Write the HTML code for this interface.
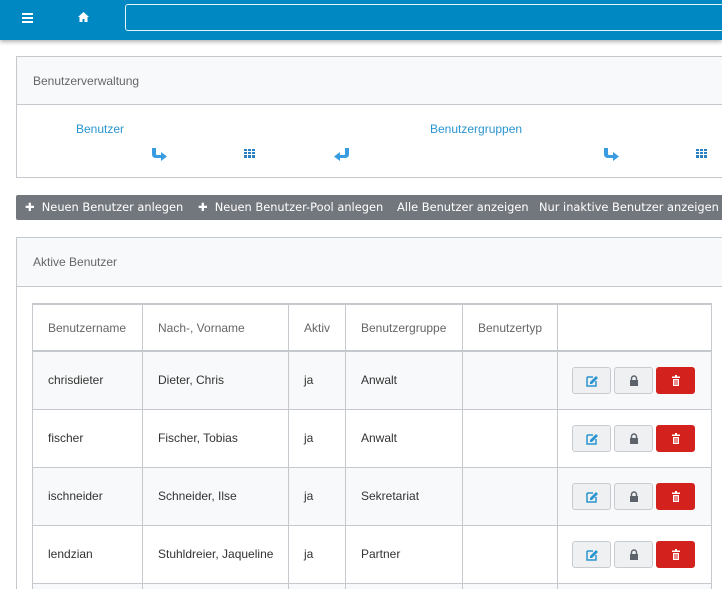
<!DOCTYPE html>
<html style="overflow:hidden;width:722px;height:589px"><head><meta charset="utf-8"><style>
*{box-sizing:border-box;margin:0;padding:0}
body{width:722px;height:589px;overflow:hidden;background:#fff;font-family:"Liberation Sans",sans-serif;font-size:12px;color:#333;position:relative}
.nav{position:absolute;left:0;top:0;width:722px;height:40px;background:#0088c2;box-shadow:0 2px 4px rgba(0,0,0,.3)}
.search{position:absolute;left:125px;top:4px;width:610px;height:27px;border:1px solid #e6f2f8;border-radius:3px}
.p{position:absolute;border:1px solid #c5c9ce;border-right:none;background:#fff}
.ph{background:#f8f9fa;border-bottom:1px solid #c5c9ce;color:#666;padding-left:16px}
a{color:#2a95d0;text-decoration:none;position:absolute}
.tb{position:absolute;left:16px;top:195px;width:720px;height:25px;background:#72767d;border-radius:2px;color:#fff;font-family:"DejaVu Sans",sans-serif;font-size:11.4px;line-height:25px;white-space:nowrap}
.tb span{position:absolute}
.wrap{position:absolute;left:0;top:0;width:722px;height:589px;overflow:hidden}
table{position:absolute;left:32px;top:303px;border-collapse:collapse;width:680px}
td,th{border:1px solid #c5c9ce;text-align:left;padding-left:15px;font-weight:normal;height:58px;vertical-align:middle}
th{height:47px;color:#666;border-width:2px 1px 2px 1px}
tr.g td{background:#f8f9fa}
.b{display:inline-block;width:39px;height:27px;border:1px solid #c8ccd1;border-radius:3px;background:#eef0f2;margin-right:3px;vertical-align:middle;position:relative}
.b svg{position:absolute;left:13px;top:7px}
.b.r{background:#d3221e;border-color:#d3221e}
</style></head><body><div class="wrap">
<div class="nav">
<svg style="position:absolute;left:22px;top:13px" width="11" height="10"><rect y="0" width="11" height="2" fill="#fff"/><rect y="4" width="11" height="2" fill="#fff"/><rect y="8" width="11" height="2" fill="#fff"/></svg>
<svg style="position:absolute;left:78px;top:12px" width="11" height="10"><path d="M5.5 0L0 5h1.5v5h3V7h2v3h3V5H11z" fill="#fff"/></svg>
<div class="search"></div>
</div>
<div class="p" style="left:16px;top:56px;width:710px;height:122px">
<div class="ph" style="height:48px;line-height:48px">Benutzerverwaltung</div>
<a style="left:59px;top:65px">Benutzer</a>
<a style="left:413px;top:65px">Benutzergruppen</a>
<svg style="position:absolute;left:134px;top:90px" width="17" height="15"><path d="M1 1h4v6q0 1 1 1h4V5l6 4.5L10 14v-3H5q-4 0-4-4z" fill="#3a9be0"/></svg>
<svg style="position:absolute;left:227px;top:92px" width="13" height="10" fill="#2a7fc0"><rect x="0" y="0" width="3" height="2"/><rect x="4" y="0" width="3" height="2"/><rect x="8" y="0" width="3" height="2"/><rect x="0" y="3" width="3" height="2"/><rect x="4" y="3" width="3" height="2"/><rect x="8" y="3" width="3" height="2"/><rect x="0" y="6" width="3" height="3"/><rect x="4" y="6" width="3" height="3"/><rect x="8" y="6" width="3" height="3"/></svg>
<svg style="position:absolute;left:316px;top:90px" width="17" height="15"><path d="M16 1h-4v6q0 1-1 1H7V5L1 9.5 7 14v-3h5q4 0 4-4z" fill="#3a9be0"/></svg>
<svg style="position:absolute;left:586px;top:90px" width="17" height="15"><path d="M1 1h4v6q0 1 1 1h4V5l6 4.5L10 14v-3H5q-4 0-4-4z" fill="#3a9be0"/></svg>
<svg style="position:absolute;left:679px;top:92px" width="13" height="10" fill="#2a7fc0"><rect x="0" y="0" width="3" height="2"/><rect x="4" y="0" width="3" height="2"/><rect x="8" y="0" width="3" height="2"/><rect x="0" y="3" width="3" height="2"/><rect x="4" y="3" width="3" height="2"/><rect x="8" y="3" width="3" height="2"/><rect x="0" y="6" width="3" height="3"/><rect x="4" y="6" width="3" height="3"/><rect x="8" y="6" width="3" height="3"/></svg>
</div>
<div class="tb">
<span style="left:9px">✚&nbsp; Neuen Benutzer anlegen</span>
<span style="left:182px">✚&nbsp; Neuen Benutzer-Pool anlegen</span>
<span style="left:381px">Alle Benutzer anzeigen</span>
<span style="left:523px">Nur inaktive Benutzer anzeigen</span>
</div>
<div class="p" style="left:16px;top:237px;width:710px;height:360px">
<div class="ph" style="height:49px;line-height:49px">Aktive Benutzer</div>
</div>
<table>
<tr><th style="width:110px">Benutzername</th><th style="width:146px">Nach-, Vorname</th><th style="width:57px">Aktiv</th><th style="width:117px">Benutzergruppe</th><th style="width:95px">Benutzertyp</th><th></th></tr>
<tr class="g"><td>chrisdieter</td><td>Dieter, Chris</td><td>ja</td><td>Anwalt</td><td></td><td style="padding-left:14px"><span class="b"><svg width="12" height="12"><path d="M1 2h6M1 2v9h9V6" stroke="#2a95d0" fill="none" stroke-width="1.5"/><path d="M10 1l2 2-6 6H4V7z" fill="#2a95d0"/></svg></span><span class="b"><svg width="12" height="12"><rect x="2" y="5" width="8" height="6" fill="#5c636a"/><path d="M3.5 5V3.5a2.5 2.5 0 0 1 5 0V5" stroke="#5c636a" fill="none" stroke-width="1.4"/></svg></span><span class="b r"><svg width="12" height="12"><rect x="2" y="1.5" width="8" height="1.5" fill="#fff"/><rect x="5" y="0" width="2" height="2" fill="#fff"/><path d="M3 4h6v7H3z" fill="#fff"/><path d="M5 5v5M7 5v5" stroke="#d3221e"/></svg></span></td></tr>
<tr><td>fischer</td><td>Fischer, Tobias</td><td>ja</td><td>Anwalt</td><td></td><td style="padding-left:14px"><span class="b"><svg width="12" height="12"><path d="M1 2h6M1 2v9h9V6" stroke="#2a95d0" fill="none" stroke-width="1.5"/><path d="M10 1l2 2-6 6H4V7z" fill="#2a95d0"/></svg></span><span class="b"><svg width="12" height="12"><rect x="2" y="5" width="8" height="6" fill="#5c636a"/><path d="M3.5 5V3.5a2.5 2.5 0 0 1 5 0V5" stroke="#5c636a" fill="none" stroke-width="1.4"/></svg></span><span class="b r"><svg width="12" height="12"><rect x="2" y="1.5" width="8" height="1.5" fill="#fff"/><rect x="5" y="0" width="2" height="2" fill="#fff"/><path d="M3 4h6v7H3z" fill="#fff"/><path d="M5 5v5M7 5v5" stroke="#d3221e"/></svg></span></td></tr>
<tr class="g"><td>ischneider</td><td>Schneider, Ilse</td><td>ja</td><td>Sekretariat</td><td></td><td style="padding-left:14px"><span class="b"><svg width="12" height="12"><path d="M1 2h6M1 2v9h9V6" stroke="#2a95d0" fill="none" stroke-width="1.5"/><path d="M10 1l2 2-6 6H4V7z" fill="#2a95d0"/></svg></span><span class="b"><svg width="12" height="12"><rect x="2" y="5" width="8" height="6" fill="#5c636a"/><path d="M3.5 5V3.5a2.5 2.5 0 0 1 5 0V5" stroke="#5c636a" fill="none" stroke-width="1.4"/></svg></span><span class="b r"><svg width="12" height="12"><rect x="2" y="1.5" width="8" height="1.5" fill="#fff"/><rect x="5" y="0" width="2" height="2" fill="#fff"/><path d="M3 4h6v7H3z" fill="#fff"/><path d="M5 5v5M7 5v5" stroke="#d3221e"/></svg></span></td></tr>
<tr><td>lendzian</td><td>Stuhldreier, Jaqueline</td><td>ja</td><td>Partner</td><td></td><td style="padding-left:14px"><span class="b"><svg width="12" height="12"><path d="M1 2h6M1 2v9h9V6" stroke="#2a95d0" fill="none" stroke-width="1.5"/><path d="M10 1l2 2-6 6H4V7z" fill="#2a95d0"/></svg></span><span class="b"><svg width="12" height="12"><rect x="2" y="5" width="8" height="6" fill="#5c636a"/><path d="M3.5 5V3.5a2.5 2.5 0 0 1 5 0V5" stroke="#5c636a" fill="none" stroke-width="1.4"/></svg></span><span class="b r"><svg width="12" height="12"><rect x="2" y="1.5" width="8" height="1.5" fill="#fff"/><rect x="5" y="0" width="2" height="2" fill="#fff"/><path d="M3 4h6v7H3z" fill="#fff"/><path d="M5 5v5M7 5v5" stroke="#d3221e"/></svg></span></td></tr>
<tr class="g"><td></td><td></td><td></td><td></td><td></td><td></td></tr>
</table>
</div></body></html>
